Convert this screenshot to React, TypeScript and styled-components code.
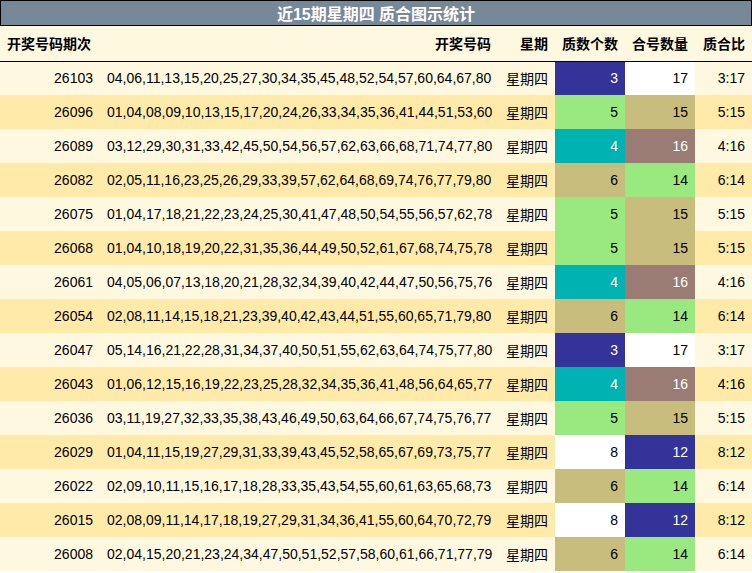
import React from "react";
import styled, { createGlobalStyle } from "styled-components";

const Global = createGlobalStyle`
  body { margin: 0; background: #fff; font-family: "Liberation Sans", "Noto Sans CJK SC", sans-serif; }
`;

const Wrap = styled.div`width: 752px;`;
const Title = styled.div`
  height: 24px; background: #778899; border: 1px solid #000; color: #fff;
  font-weight: bold; font-size: 16px; display: flex; align-items: center; justify-content: center;
`;
const Table = styled.table`
  width: 752px; border-collapse: collapse; table-layout: fixed; font-size: 14px;
`;
const Th = styled.th<{ $w: number; $left?: boolean }>`
  width: ${p => p.$w}px; height: 35px; padding: 0 7px; box-sizing: border-box;
  text-align: ${p => (p.$left ? "left" : "right")}; background: #fff8e1;
  border-bottom: 1px solid #000; font-size: 14px; white-space: nowrap;
`;
const Tr = styled.tr<{ $alt: boolean }>`
  background: ${p => (p.$alt ? "#ffeaaa" : "#fff8e1")};
`;
const Td = styled.td<{ $bg?: string; $fg?: string }>`
  height: 34px; padding: 0 7px; text-align: right; white-space: nowrap; box-sizing: border-box;
  background: ${p => p.$bg || "transparent"}; color: ${p => p.$fg || "#000"};
`;

const rows: [string, string, number, number][] = [
  ["26103","04,06,11,13,15,20,25,27,30,34,35,45,48,52,54,57,60,64,67,80",3,17],
  ["26096","01,04,08,09,10,13,15,17,20,24,26,33,34,35,36,41,44,51,53,60",5,15],
  ["26089","03,12,29,30,31,33,42,45,50,54,56,57,62,63,66,68,71,74,77,80",4,16],
  ["26082","02,05,11,16,23,25,26,29,33,39,57,62,64,68,69,74,76,77,79,80",6,14],
  ["26075","01,04,17,18,21,22,23,24,25,30,41,47,48,50,54,55,56,57,62,78",5,15],
  ["26068","01,04,10,18,19,20,22,31,35,36,44,49,50,52,61,67,68,74,75,78",5,15],
  ["26061","04,05,06,07,13,18,20,21,28,32,34,39,40,42,44,47,50,56,75,76",4,16],
  ["26054","02,08,11,14,15,18,21,23,39,40,42,43,44,51,55,60,65,71,79,80",6,14],
  ["26047","05,14,16,21,22,28,31,34,37,40,50,51,55,62,63,64,74,75,77,80",3,17],
  ["26043","01,06,12,15,16,19,22,23,25,28,32,34,35,36,41,48,56,64,65,77",4,16],
  ["26036","03,11,19,27,32,33,35,38,43,46,49,50,63,64,66,67,74,75,76,77",5,15],
  ["26029","01,04,11,15,19,27,29,31,33,39,43,45,52,58,65,67,69,73,75,77",8,12],
  ["26022","02,09,10,11,15,16,17,18,28,33,35,43,54,55,60,61,63,65,68,73",6,14],
  ["26015","02,08,09,11,14,17,18,19,27,29,31,34,36,41,55,60,64,70,72,79",8,12],
  ["26008","02,04,15,20,21,23,24,34,47,50,51,52,57,58,60,61,66,71,77,79",6,14],
];

const col: Record<number, [string, string]> = {
  3: ["#333399", "#fff"], 17: ["#ffffff", "#000"],
  5: ["#99e880", "#000"], 15: ["#c9bd7d", "#000"],
  4: ["#00b3b3", "#fff"], 16: ["#9a7c75", "#fff"],
  6: ["#c9bd7d", "#000"], 14: ["#99e880", "#000"],
  8: ["#ffffff", "#000"], 12: ["#333399", "#fff"],
};

export default function App() {
  return (
    <Wrap>
      <Global />
      <Title>近15期星期四 质合图示统计</Title>
      <Table>
        <thead>
          <tr>
            <Th $w={100} $left>开奖号码期次</Th>
            <Th $w={398}>开奖号码</Th>
            <Th $w={57}>星期</Th>
            <Th $w={70}>质数个数</Th>
            <Th $w={70}>合号数量</Th>
            <Th $w={57}>质合比</Th>
          </tr>
        </thead>
        <tbody>
          {rows.map(([id, nums, p, c], i) => (
            <Tr key={id} $alt={i % 2 === 1}>
              <Td>{id}</Td>
              <Td>{nums}</Td>
              <Td>星期四</Td>
              <Td $bg={col[p][0]} $fg={col[p][1]}>{p}</Td>
              <Td $bg={col[c][0]} $fg={col[c][1]}>{c}</Td>
              <Td>{p}:{c}</Td>
            </Tr>
          ))}
        </tbody>
      </Table>
    </Wrap>
  );
}
